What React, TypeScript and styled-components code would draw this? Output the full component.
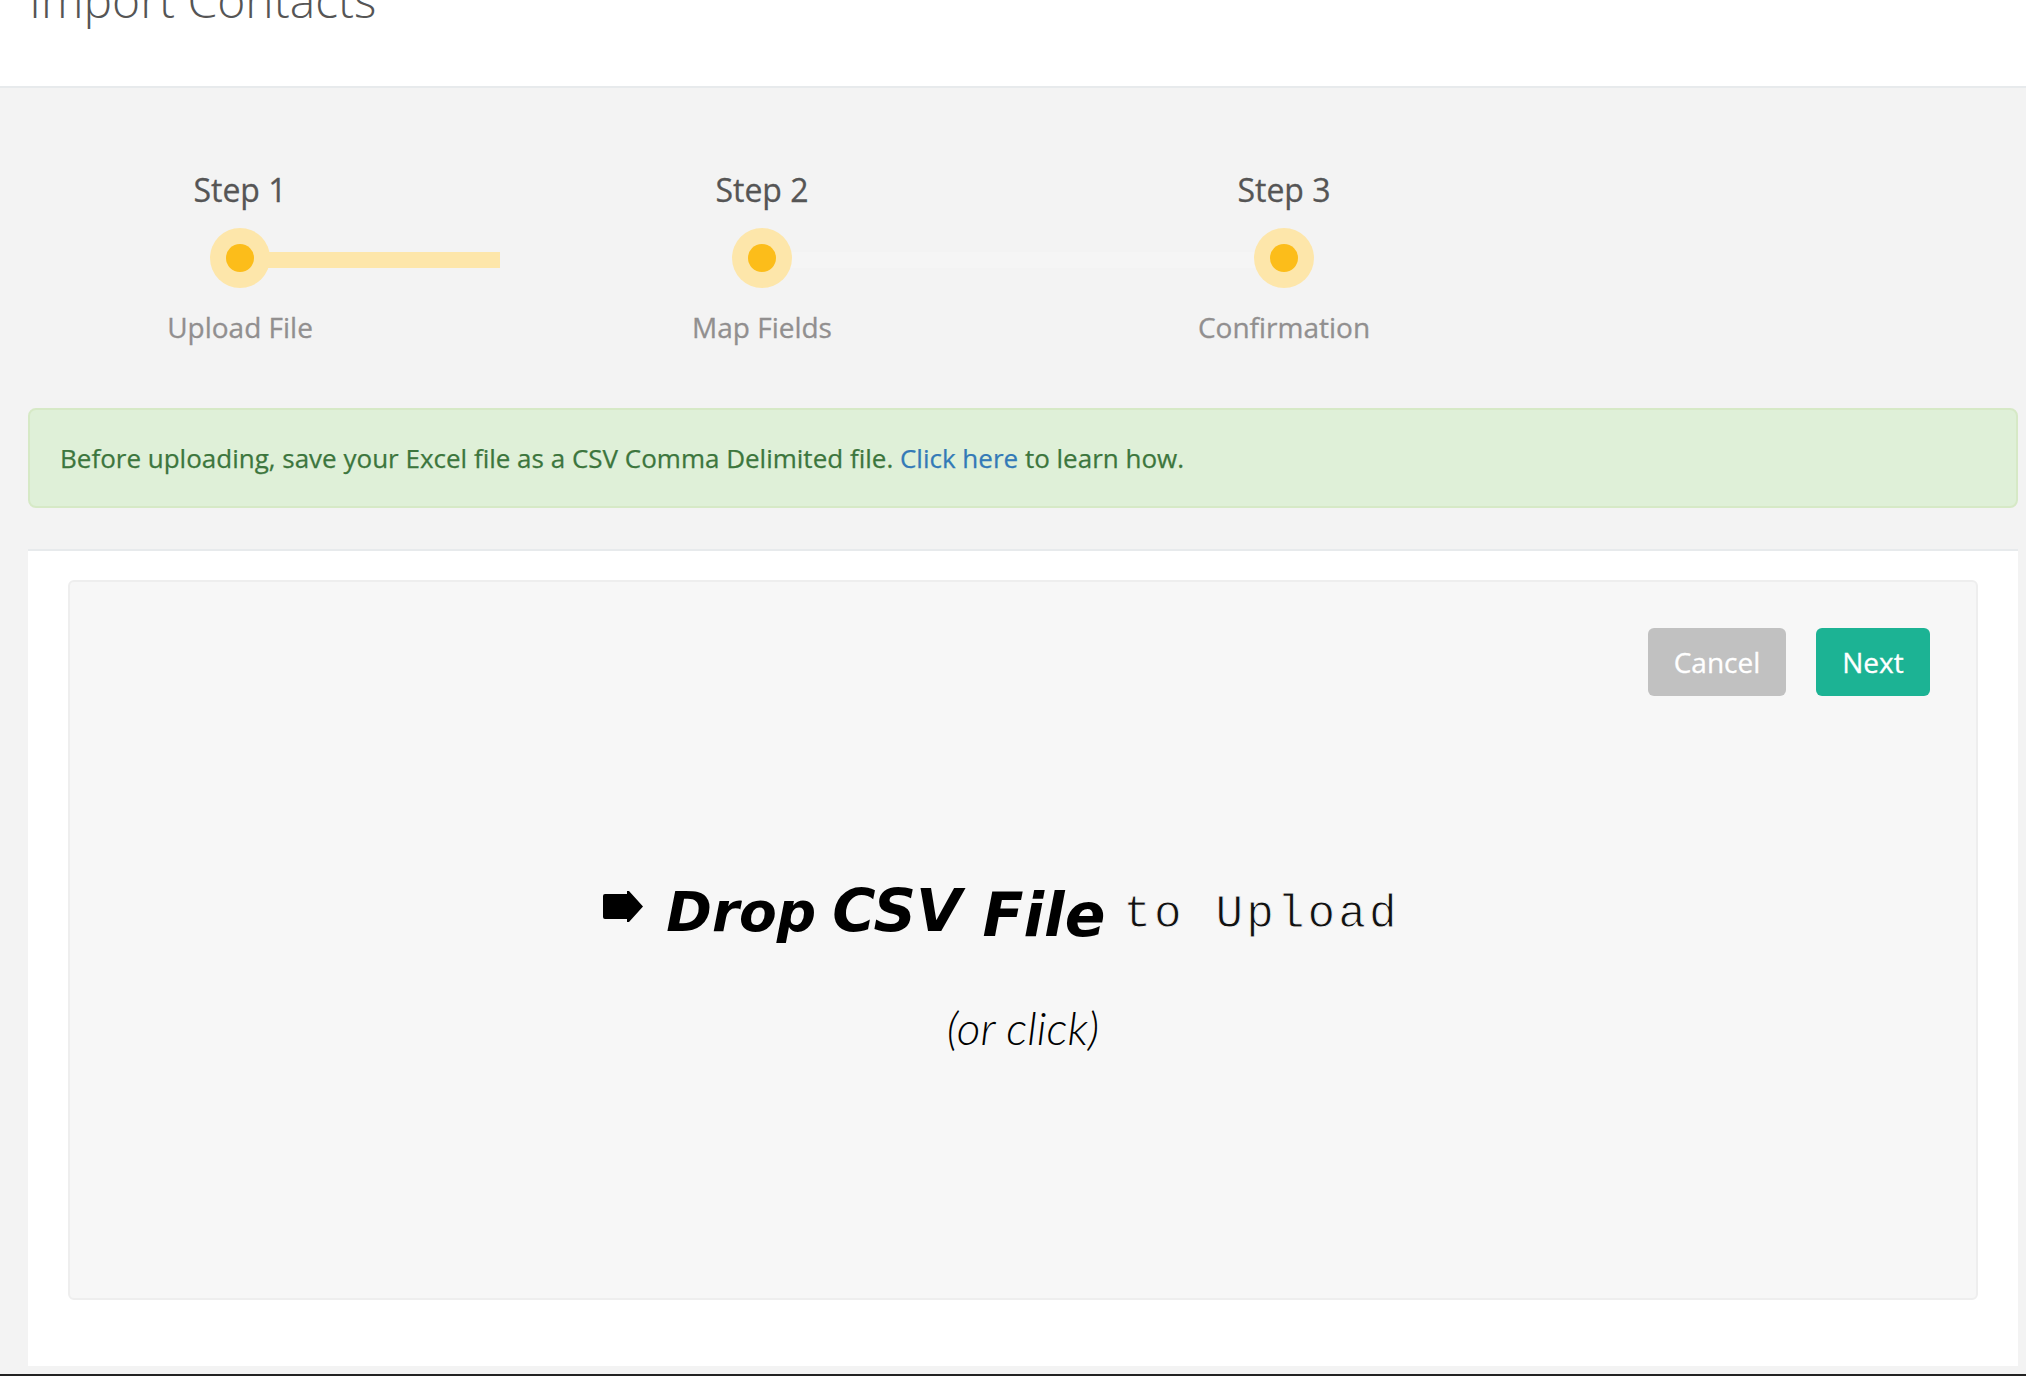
import React from "react";
import styled, { createGlobalStyle } from "styled-components";

const Global = createGlobalStyle`
  html, body { margin: 0; padding: 0; background: #f3f3f3; }
  body { font-family: "Open Sans", "Liberation Sans", sans-serif; }
`;

const Page = styled.div`
  width: 2026px;
  height: 1376px;
  overflow: hidden;
  display: flex;
  flex-direction: column;
  background: #f3f3f3;
`;

const Header = styled.header`
  flex: none;
  height: 86px;
  box-sizing: content-box;
  background: #fff;
  border-bottom: 2px solid #e7eaec;
  overflow: hidden;
  padding-left: 29px;
`;

const Title = styled.h1`
  margin: -32px 0 0;
  font-size: 48px;
  line-height: 64px;
  font-weight: 300;
  color: #555;
`;

const Steps = styled.ol`
  list-style: none;
  margin: 0;
  padding: 80px 0 0 0;
  display: flex;
  height: 320px;
  box-sizing: border-box;
`;

const Step = styled.li<{ $first?: boolean }>`
  flex: none;
  width: 522px;
  margin-left: ${(p) => (p.$first ? "-21px" : "0")};
  display: flex;
  flex-direction: column;
  align-items: center;
`;

const StepName = styled.div`
  font-size: 32px;
  line-height: 44px;
  color: #555;
  -webkit-text-stroke: 0.3px #555;
`;

const Track = styled.div`
  position: relative;
  width: 100%;
  height: 60px;
  margin-top: 16px;
  display: flex;
  justify-content: center;
  align-items: center;
`;

const Line = styled.span<{ $fill: string; $width: number }>`
  position: absolute;
  left: 50%;
  top: 24px;
  height: 16px;
  width: ${(p) => p.$width}px;
  background: ${(p) => p.$fill};
`;

const Dot = styled.span`
  position: relative;
  width: 60px;
  height: 60px;
  border-radius: 50%;
  background: #fde6aa;
  display: flex;
  align-items: center;
  justify-content: center;
  &::after {
    content: "";
    width: 28px;
    height: 28px;
    border-radius: 50%;
    background: #fcbd1a;
  }
`;

const StepLabel = styled.div`
  margin-top: 20px;
  font-size: 28px;
  line-height: 38px;
  color: #918f8f;
  -webkit-text-stroke: 0.3px #918f8f;
`;

const Content = styled.main`
  margin: 0 8px 0 28px;
  display: flex;
  flex-direction: column;
`;

const Alert = styled.div`
  height: 100px;
  box-sizing: border-box;
  display: flex;
  align-items: center;
  padding: 0 30px;
  background: #dff0d8;
  border: 2px solid #d6e9c6;
  border-radius: 8px;
  font-size: 26px;
  color: #3c763d;
  -webkit-text-stroke: 0.25px currentColor;
`;

const AlertText = styled.p`
  margin: 0;
`;

const AlertLink = styled.a`
  color: #337ab7;
`;

const Panel = styled.section`
  margin-top: 41px;
  height: 817px;
  box-sizing: border-box;
  background: #fff;
  border-top: 2px solid #e7eaec;
  padding: 29px 40px 0;
`;

const Well = styled.div`
  height: 720px;
  box-sizing: border-box;
  background: #f7f7f7;
  border: 2px solid #eeeeee;
  border-radius: 6px;
  padding: 46px 46px 0 0;
  display: flex;
  flex-direction: column;
`;

const Actions = styled.div`
  display: flex;
  justify-content: flex-end;
  gap: 30px;
`;

const Button = styled.button<{ $bg: string; $width: number }>`
  width: ${(p) => p.$width}px;
  height: 68px;
  border: none;
  border-radius: 6px;
  background: ${(p) => p.$bg};
  color: #fff;
  font-family: inherit;
  font-size: 28px;
  padding: 0;
  -webkit-text-stroke: 0.3px #fff;
`;

const Drop = styled.div`
  margin-top: 176px;
  padding-left: 46px;
  display: flex;
  flex-direction: column;
  align-items: center;
`;

const DropLine = styled.div`
  display: flex;
  align-items: baseline;
  height: 90px;
  color: #000;
  padding-right: 43px;
`;

const ArrowIcon = styled.svg`
  flex: none;
  width: 40px;
  height: 31px;
  margin-right: 23px;
  align-self: center;
  transform: translateY(-11px);
`;

const Strong = styled.span<{ $shift?: number; $size: number; $gap: number }>`
  font-family: "DejaVu Sans", sans-serif;
  font-weight: 700;
  font-style: italic;
  font-size: ${(p) => p.$size}px;
  margin-right: ${(p) => p.$gap}px;
  transform: translateY(${(p) => p.$shift ?? 0}px);
`;

const Mono = styled.span`
  font-family: "Liberation Mono", monospace;
  font-size: 46px;
  letter-spacing: 3.1px;
  color: #111;
  -webkit-text-stroke: 0.9px #f7f7f7;
  transform: translateY(-1px);
`;

const OrClick = styled.div`
  margin-top: 38px;
  font-family: Lato, sans-serif;
  font-weight: 300;
  font-style: italic;
  font-size: 46px;
  color: #000;
`;

const BottomEdge = styled.div`
  margin-top: auto;
  height: 2px;
  flex: none;
  background: #222;
`;

export default function App() {
  return (
    <Page>
      <Global />
      <Header>
        <Title>Import Contacts</Title>
      </Header>
      <Steps>
        <Step $first>
          <StepName>Step 1</StepName>
          <Track>
            <Line $fill="#fde6aa" $width={260} />
            <Dot />
          </Track>
          <StepLabel>Upload File</StepLabel>
        </Step>
        <Step>
          <StepName>Step 2</StepName>
          <Track>
            <Line $fill="#f5f5f5" $width={522} />
            <Dot />
          </Track>
          <StepLabel>Map Fields</StepLabel>
        </Step>
        <Step>
          <StepName>Step 3</StepName>
          <Track>
            <Dot />
          </Track>
          <StepLabel>Confirmation</StepLabel>
        </Step>
      </Steps>
      <Content>
        <Alert>
          <AlertText>
            Before uploading, save your Excel file as a CSV Comma Delimited file.{" "}
            <AlertLink>Click here</AlertLink> to learn how.
          </AlertText>
        </Alert>
        <Panel>
          <Well>
            <Actions>
              <Button $bg="#c1c1c1" $width={138}>Cancel</Button>
              <Button $bg="#1cb394" $width={114}>Next</Button>
            </Actions>
            <Drop>
              <DropLine>
                <ArrowIcon viewBox="0 0 40 31" aria-hidden="true">
                  <path d="M2 3h22V0h2l14 15.5L26 31h-2v-3H2a2 2 0 0 1-2-2V5a2 2 0 0 1 2-2z" fill="#000" />
                </ArrowIcon>
                <Strong $size={55} $gap={16} $shift={3}>Drop</Strong>
                <Strong $size={59} $gap={21} $shift={3}>CSV</Strong>
                <Strong $size={60} $gap={18} $shift={8}>File</Strong>
                <Mono>to Upload</Mono>
              </DropLine>
              <OrClick>(or click)</OrClick>
            </Drop>
          </Well>
        </Panel>
      </Content>
      <BottomEdge />
    </Page>
  );
}
